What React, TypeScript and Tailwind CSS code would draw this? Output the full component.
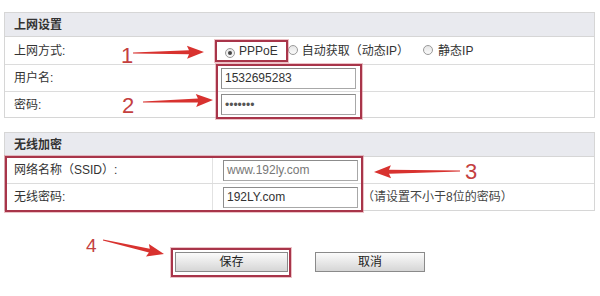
import React from "react";

const font = "font-['Liberation_Sans','Noto_Sans_CJK_SC',sans-serif]";

const Radio = ({ checked }: { checked?: boolean }) => (
  <span className="inline-flex items-center justify-center w-[10px] h-[10px] rounded-full border border-[#9a9a9a] bg-gradient-to-b from-[#e6e6e6] to-[#fafafa]">
    {checked && <span className="w-[4px] h-[4px] rounded-full bg-[#444]" />}
  </span>
);

const Input = ({ value, muted, className = "" }: { value: string; muted?: boolean; className?: string }) => (
  <div
    className={`w-[135px] h-[21px] border border-[#a8a8a8] border-t-[#8c8c8c] border-l-[#8c8c8c] bg-white flex items-center pl-[3px] text-[12px] ${
      muted ? "text-[#777]" : "text-[#333]"
    } ${className}`}
  >
    {value}
  </div>
);

const Row = ({
  label,
  children,
  divider,
  last,
  h = "h-[27px]",
}: {
  label: string;
  children: React.ReactNode;
  divider?: boolean;
  last?: boolean;
  h?: string;
}) => (
  <div className={`flex ${h} ${last ? "" : "border-b border-[#dcdcdc]"}`}>
    <div
      className={`w-[208px] pl-[9px] flex items-center text-[12px] text-[#333] ${
        divider ? "border-r border-[#e2e2e2]" : ""
      }`}
    >
      {label}
    </div>
    <div className="flex-1 flex items-center pl-[8px]">{children}</div>
  </div>
);

const Arrow = ({ x1, y1, x2, y2 }: { x1: number; y1: number; x2: number; y2: number }) => {
  const dx = x2 - x1;
  const dy = y2 - y1;
  const len = Math.hypot(dx, dy);
  const ux = dx / len;
  const uy = dy / len;
  const nx = -uy;
  const ny = ux;
  const head = 15;
  const bx = x2 - ux * head;
  const by = y2 - uy * head;
  const p = (x: number, y: number) => `${x.toFixed(1)},${y.toFixed(1)}`;
  const pts = [
    p(x1 + nx * 0.6, y1 + ny * 0.6),
    p(bx + nx * 2, by + ny * 2),
    p(bx - ux * 2 + nx * 6.5, by - uy * 2 + ny * 6.5),
    p(x2, y2),
    p(bx - ux * 2 - nx * 6.5, by - uy * 2 - ny * 6.5),
    p(bx - nx * 2, by - ny * 2),
    p(x1 - nx * 0.6, y1 - ny * 0.6),
  ].join(" ");
  return <polygon points={pts} fill="#d8322f" />;
};

const RedBox = ({ className }: { className: string }) => (
  <div
    className={`absolute border-2 border-[#a8354a] shadow-[0_0_0_1px_rgba(214,120,130,0.45)] ${className}`}
  />
);

const Num = ({ n, className }: { n: string; className: string }) => (
  <span className={`absolute leading-none text-[#c4403f] font-['Liberation_Sans',sans-serif] ${className}`}>
    {n}
  </span>
);

export default function App() {
  return (
    <div className={`relative w-[600px] h-[296px] overflow-hidden bg-white ${font}`}>
      <div className="pt-[12px] pl-[4px]">
        {/* 上网设置 */}
        <div className="w-[591px] border border-[#d6d6d6] bg-white">
          <div className="h-[24px] bg-[#e9eaef] border-b border-[#d6d6d6] flex items-center pl-[9px] text-[12px] font-bold text-[#333]">
            上网设置
          </div>
          <Row label="上网方式:" h="h-[28px]">
            <div className="flex items-center text-[12px] text-[#333]">
              <span className="ml-[4px]">
                <Radio checked />
              </span>
              <span className="ml-[4px]">PPPoE</span>
              <span className="ml-[10px]">
                <Radio />
              </span>
              <span className="ml-[4px]">自动获取（动态IP）</span>
              <span className="ml-[14px]">
                <Radio />
              </span>
              <span className="ml-[5px]">静态IP</span>
            </div>
          </Row>
          <Row label="用户名:">
            <Input value="1532695283" />
          </Row>
          <Row label="密码:" h="h-[25px]" last>
            <Input value="•••••••" className="text-[6px] text-[#555]" />
          </Row>
        </div>

        {/* 无线加密 */}
        <div className="mt-[14px] w-[591px] border border-[#d6d6d6] bg-white">
          <div className="h-[24px] bg-[#e9eaef] border-b border-[#d6d6d6] flex items-center pl-[9px] text-[12px] font-bold text-[#333]">
            无线加密
          </div>
          <Row label="网络名称（SSID）:" divider>
            <Input value="www.192ly.com" muted className="ml-[2px]" />
          </Row>
          <Row label="无线密码:" divider last h="h-[26px]">
            <Input value="192LY.com" className="ml-[2px]" />
            <span className="ml-[4px] text-[12px] text-[#444]">（请设置不小于8位的密码）</span>
          </Row>
        </div>

        {/* buttons */}
        <div className="mt-[41px] flex gap-[27px] pl-[171px]">
          <button className="w-[113px] h-[20px] border border-[#8a8a8a] bg-gradient-to-b from-[#fbfbfb] to-[#d6d6d6] text-[12px] text-[#222]">
            保存
          </button>
          <button className="w-[110px] h-[20px] border border-[#8a8a8a] bg-gradient-to-b from-[#fbfbfb] to-[#d6d6d6] text-[12px] text-[#222]">
            取消
          </button>
        </div>
      </div>

      {/* annotations */}
      <RedBox className="left-[215px] top-[40px] w-[73px] h-[22px]" />
      <RedBox className="left-[216px] top-[64px] w-[146px] h-[55px]" />
      <RedBox className="left-[5px] top-[156px] w-[358px] h-[56px]" />
      <RedBox className="left-[171px] top-[248px] w-[120px] h-[29px]" />

      <svg className="absolute left-0 top-0" width="600" height="296">
        <Arrow x1={133} y1={53} x2={204} y2={52} />
        <Arrow x1={143} y1={102} x2={213} y2={100} />
        <Arrow x1={460} y1={171} x2={374} y2={172} />
        <Arrow x1={103} y1={240} x2={164} y2={254} />
      </svg>

      <Num n="1" className="left-[121px] top-[45px] text-[22px]" />
      <Num n="2" className="left-[122px] top-[95px] text-[22px]" />
      <Num n="3" className="left-[465px] top-[161px] text-[22px]" />
      <Num n="4" className="left-[86px] top-[236px] text-[19px]" />
    </div>
  );
}
